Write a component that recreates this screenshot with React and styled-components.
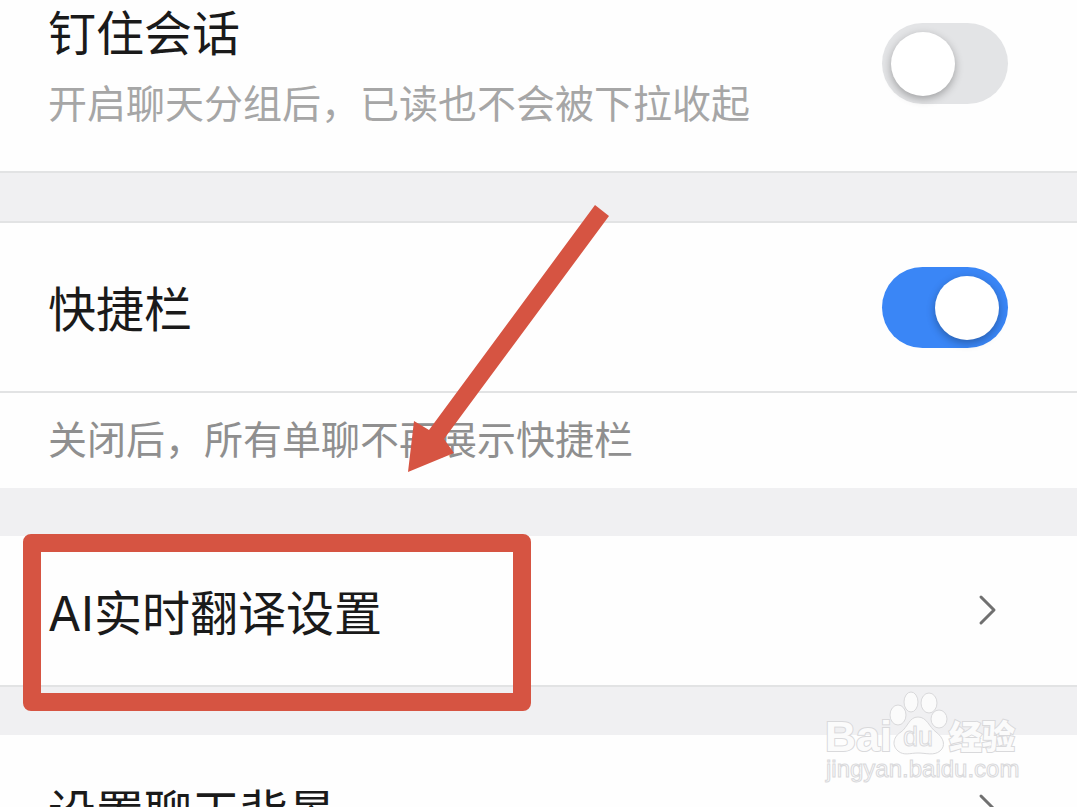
import React, { useState } from 'react'
import styled, { createGlobalStyle } from 'styled-components'

function Chevron() {
    return (
        <ChevronIcon viewBox="0 0 20 34" aria-hidden="true">
            <path d="M4 3 L17 16 L4 29" />
        </ChevronIcon>
    )
}

function SwitchRow({id,title,description,defaultOn,top}) {
    const [on, setOn] = useState(Boolean(defaultOn))
    return (
        <Row as="div" $top={top} $height={top ? 171 : 168}>
            <Texts>
                <Title as="label" htmlFor={id}>{title}</Title>
                {description && <Description>{description}</Description>}
            </Texts>
            <Switch
                id={id}
                type="checkbox"
                role="switch"
                $top={top}
                checked={on}
                onChange={e => setOn(e.target.checked)}
            />
        </Row>
    )
}

function LinkRow({title}) {
    return (
        <Row href="#" $height={149}>
            <Title>{title}</Title>
            <Chevron />
        </Row>
    )
}

function Arrow() {
    return (
        <ArrowIcon viewBox="0 0 202 268" aria-hidden="true">
            <path d="M188 0 L202 11 L37 234 L47 248 L1 267 L7 216 L22 225 Z" />
        </ArrowIcon>
    )
}

function Watermark() {
    return (
        <Mark viewBox="0 0 200 96" aria-label="Baidu经验">
            <text x="1" y="61" fontSize="43" fontWeight="700" strokeWidth="2" paintOrder="stroke">Bai</text>
            <ellipse cx="74" cy="25" rx="8" ry="10" />
            <ellipse cx="87" cy="12" rx="7" ry="10" />
            <ellipse cx="105" cy="13" rx="8" ry="10" />
            <ellipse cx="115" cy="29" rx="8" ry="9" />
            <path d="M94 27 C103 27 105 37 112 42 C120 48 122 56 116 61 C110 66 102 63 94 63 C86 63 80 66 74 61 C67 55 70 46 77 42 C84 37 85 27 94 27 Z" />
            <text x="79" y="56" fontSize="27" fontWeight="400">du</text>
            <text x="125" y="59" fontSize="33" fontWeight="900" strokeWidth="2" paintOrder="stroke">经验</text>
            <text x="2" y="87" fontSize="24">jingyan.baidu.com</text>
        </Mark>
    )
}

function App() {
    return (
        <Page>
            <GlobalStyle />
            <Group>
                <SwitchRow id="pin" top title="钉住会话" description="开启聊天分组后，已读也不会被下拉收起" />
            </Group>
            <Gap $line />
            <Group>
                <SwitchRow id="quick" title="快捷栏" defaultOn />
                <Note>关闭后，所有单聊不再展示快捷栏</Note>
                <Arrow />
            </Group>
            <Gap />
            <Group $line>
                <LinkRow title="AI实时翻译设置" />
                <Highlight />
            </Group>
            <Gap />
            <Group>
                <LinkRow title="设置聊天背景" />
            </Group>
            <Watermark />
        </Page>
    )
}

export default App

const GlobalStyle = createGlobalStyle`
    *{
        box-sizing:border-box;
    }
    body{
        margin:0;
        background:#fefefe;
        font-family:Inter, "Noto Sans CJK SC", sans-serif;
    }
`

const Page = styled.main`
    position:relative;
    height:100vh;
    overflow-x:hidden;
    overflow-y:auto;
    scrollbar-width:none;
    background:#fefefe;
`

const Group = styled.section`
    position:relative;
    border-bottom:${props => props.$line ? '2px solid #e2e3e4' : 'none'};
`

const Gap = styled.div`
    height:${props => props.$line ? '52px' : '48px'};
    background:#f0f0f2;
    border:solid #e2e3e4;
    border-width:${props => props.$line ? '2px 0' : '0'};
`

const Row = styled.a`
    display:flex;
    justify-content:space-between;
    align-items:${props => props.$top ? 'flex-start' : 'center'};
    min-height:${props => props.$height}px;
    padding:0 69px 0 48px;
    color:#1a1a1a;
    text-decoration:none;
`

const Texts = styled.div`
    display:flex;
    flex-direction:column;
    gap:14px;
`

const Title = styled.span`
    padding-top:6px;
    font-size:48px;
    line-height:56px;
    color:#1a1a1a;
`

const Description = styled.p`
    margin:0;
    font-size:39px;
    line-height:56px;
    color:#a6a6a6;
`

const Note = styled.p`
    margin:0;
    height:97px;
    padding:19px 48px 0;
    border-top:2px solid #e2e3e4;
    font-size:39px;
    line-height:56px;
    color:#8f8f8f;
`

const Switch = styled.input`
    appearance:none;
    flex:none;
    width:126px;
    height:81px;
    margin:${props => props.$top ? '23px' : '0'} 0 0;
    padding:9px;
    border-radius:41px;
    background:#e3e4e6;
    cursor:pointer;

    &::before{
        content:'';
        display:block;
        width:64px;
        height:64px;
        border-radius:50%;
        background:#fff;
        box-shadow:0 3px 8px rgba(0,0,0,.3);
    }

    &:checked{
        background:#3a86f6;
    }

    &:checked::before{
        margin-left:auto;
    }
`

const ChevronIcon = styled.svg`
    width:20px;
    height:34px;
    margin-right:11px;
    fill:none;
    stroke:#707070;
    stroke-width:3;
    stroke-linecap:round;
    stroke-linejoin:round;
`

const ArrowIcon = styled.svg`
    position:absolute;
    left:407px;
    bottom:15px;
    width:202px;
    height:268px;
    fill:#d65442;
    pointer-events:none;
`

const Highlight = styled.div`
    position:absolute;
    top:-2px;
    left:23px;
    z-index:1;
    width:508px;
    height:177px;
    border:18px solid #d65442;
    border-radius:8px;
    pointer-events:none;
`

const Mark = styled.svg`
    position:absolute;
    right:53px;
    top:690px;
    width:200px;
    height:96px;
    fill:#fbfbfb;
    stroke:#d9d9db;
    stroke-width:1;
    font-family:"Liberation Sans", "Noto Sans CJK SC", sans-serif;
    pointer-events:none;
`
